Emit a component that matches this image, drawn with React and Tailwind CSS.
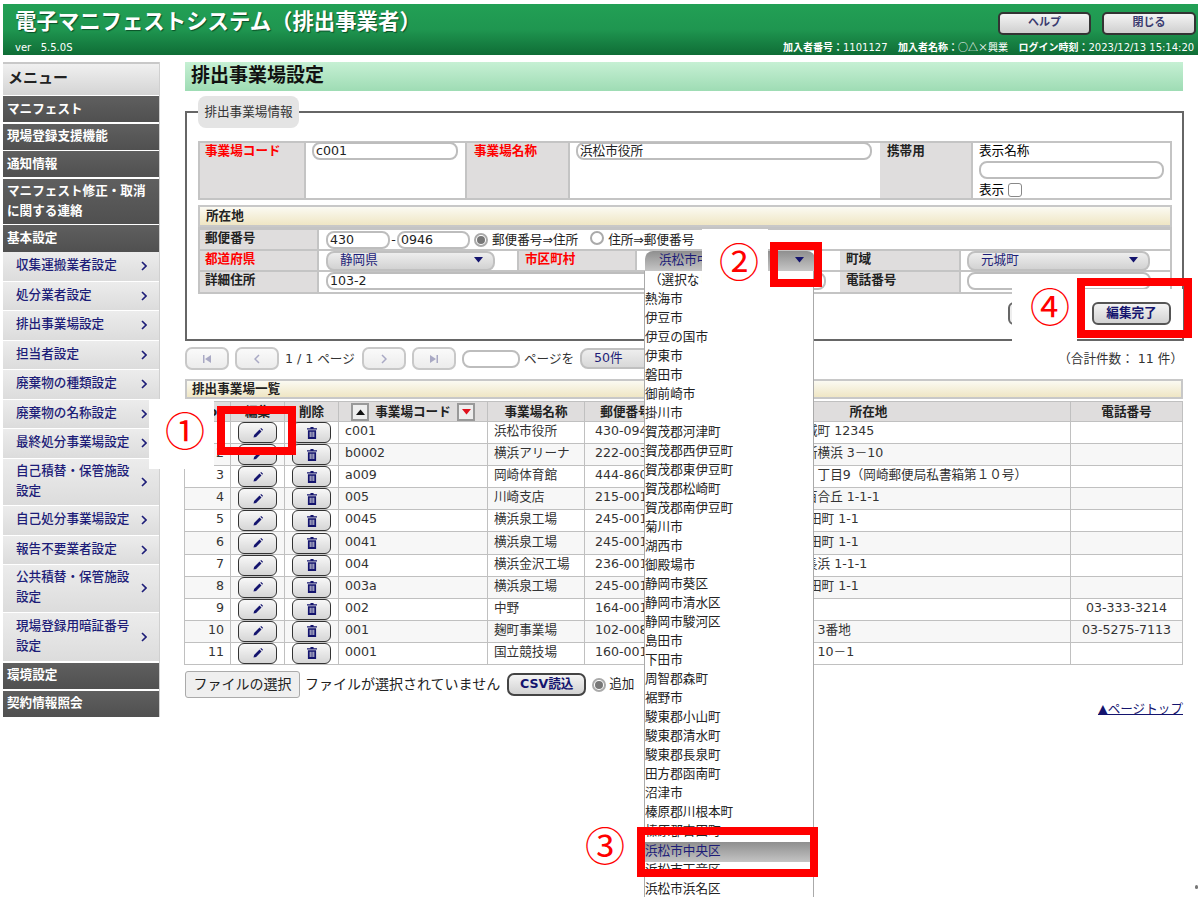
import React from "react";

const FONT = "[font-family:'DejaVu_Sans','Noto_Sans_CJK_JP',sans-serif]";
const CJK = "[font-family:'Noto_Sans_CJK_JP',sans-serif]";

const Dark = ({ h, children }) => (
  <div className={`bg-gradient-to-b from-[#5f5f5f] to-[#505050] text-white font-bold pl-[4px] pb-[1px] flex items-center leading-[20px] text-[12.6px] ${h}`}>
    <div>{children}</div>
  </div>
);

const Sub = ({ h, children }) => (
  <div className={`bg-gradient-to-b from-[#ececec] to-[#dcdcdc] text-[#1d1d78] font-medium pl-[13px] pr-[12px] flex items-center justify-between leading-[20px] text-[12.6px] ${h}`}>
    <div className="w-[114px] pb-[2px]">{children}</div>
    <svg width="6" height="10" viewBox="0 0 6 10" className="shrink-0"><path d="M1 1l4 4-4 4" fill="none" stroke="#1d1d78" strokeWidth="1.6" /></svg>
  </div>
);

const Label = ({ red, w, pl = "pl-[7px]", children }) => (
  <div className={`bg-[#dfdddd] font-bold border-r-2 border-[#c4c4c4] shrink-0 leading-[16px] ${pl} ${w} ${red ? "text-[#ff0000]" : "text-[#222]"}`}>{children}</div>
);

const Field = ({ w, value }) => (
  <div className={`h-[18px] border-2 border-[#bdbdbd] rounded-[8px] bg-white px-[2px] leading-[14px] text-[#222] overflow-hidden whitespace-nowrap ${w}`}>{value}</div>
);

const Arrow = ({ color = "#14146e" }) => (
  <svg width="9" height="6" viewBox="0 0 9 6" className="shrink-0"><path d="M0 0h9L4.500 5.500z" fill={color} /></svg>
);

const SelectBox = ({ w, value }) => (
  <div className={`h-[20px] border-2 border-[#c0c0c0] rounded-[8px] bg-gradient-to-b from-[#eeeeee] to-[#d2d2d2] flex items-center justify-between pl-[12px] pr-[10px] pb-[2px] text-[#1d1d78] ${w}`}>
    <span>{value}</span>
    <Arrow />
  </div>
);

const Radio = ({ on }) => (
  <span className="inline-flex w-[14px] h-[14px] rounded-full border-2 border-[#aaa] bg-white items-center justify-center shrink-0">
    {on && <span className="w-[8px] h-[8px] rounded-full bg-[#777]" />}
  </span>
);

const PagerBtn = ({ w = "w-[44px]", children }) => (
  <div className={`h-[23px] ${w} border-2 border-[#c8c8c8] rounded-[7px] bg-gradient-to-b from-[#fafafa] to-[#ececec] flex items-center justify-center shrink-0`}>{children}</div>
);

const Pencil = () => (
  <svg width="12" height="12" viewBox="0 0 12 12"><path d="M1.500 10.500l.6-2.600 5.400-5.400 2 2-5.400 5.400zM8.300 1.700l.9-.7 1.800 1.800-.7.900z" fill="#14146e" /></svg>
);

const Trash = () => (
  <svg width="10" height="12" viewBox="0 0 11 13"><path d="M3.800 0h3.400v1.200H11v1.400H0V1.200h3.800zM1 3.400h9V13H1zM3 5v6h1V5zm2 0v6h1V5zm2 0v6h1V5z" fill="#14146e" fillRule="evenodd" /></svg>
);

const RowBtn = ({ children }) => (
  <div className="mx-auto -my-[1px] w-[39px] h-[21px] border-[1.5px] border-[#333] rounded-[6px] bg-gradient-to-b from-[#f8f8f8] to-[#d6d6d6] flex items-center justify-center">{children}</div>
);

const rows = [
  ["c001", "浜松市役所", "430-0946", "静岡県浜松市中央区元城町 12345", ""],
  ["b0002", "横浜アリーナ", "222-0033", "神奈川県横浜市港北区新横浜 3－10", ""],
  ["a009", "岡崎体育館", "444-8601", "愛知県岡崎市戸崎町字　丁目9（岡崎郵便局私書箱第１０号）", ""],
  ["005", "川崎支店", "215-0011", "神奈川県川崎市麻生区百合丘 1-1-1", ""],
  ["0045", "横浜泉工場", "245-0016", "神奈川県横浜市 泉区中田町 1-1", ""],
  ["0041", "横浜泉工場", "245-0016", "神奈川県横浜市 泉区中田町 1-1", ""],
  ["004", "横浜金沢工場", "236-0011", "神奈川県横浜市金沢区長浜 1-1-1", ""],
  ["003a", "横浜泉工場", "245-0016", "神奈川県横浜市 泉区中田町 1-1", ""],
  ["002", "中野", "164-0011", "東京都中野区中央", "03-333-3214"],
  ["001", "麹町事業場", "102-0083", "東京都千代田区麹町　　3番地", "03-5275-7113"],
  ["0001", "国立競技場", "160-0013", "東京都新宿区霞ヶ丘町　10－1", ""],
];

const cities = [
  "（選択なし）", "熱海市", "伊豆市", "伊豆の国市", "伊東市", "磐田市", "御前崎市", "掛川市", "賀茂郡河津町", "賀茂郡西伊豆町", "賀茂郡東伊豆町", "賀茂郡松崎町", "賀茂郡南伊豆町", "菊川市", "湖西市", "御殿場市", "静岡市葵区", "静岡市清水区", "静岡市駿河区", "島田市", "下田市", "周智郡森町", "裾野市", "駿東郡小山町", "駿東郡清水町", "駿東郡長泉町", "田方郡函南町", "沼津市", "榛原郡川根本町", "榛原郡吉田町", "浜松市中央区", "浜松市天竜区", "浜松市浜名区",
];

const th = "bg-[#dfdddd] border-[1.5px] border-[#c0c0c0] font-bold text-[#222] p-0 text-center leading-[18px]";
const td = "border-[1.5px] border-[#c0c0c0] p-0 text-[#333] font-normal leading-[18px]";

export default function App() {
  return (
    <div className={`relative w-[1198px] h-[899px] overflow-hidden bg-white pl-[3px] pt-[4px] text-[12.6px] ${FONT}`}>
      {/* header */}
      <header className="h-[51px] bg-gradient-to-b from-[#22a055] via-[#1f9650] to-[#0f6d36] flex justify-between text-white">
        <div className="pl-[12px] flex flex-col">
          <div className="text-[21.4px] font-bold leading-[24px] mt-[6px] [text-shadow:1px_1px_1px_#0b4f27] whitespace-nowrap">電子マニフェストシステム（排出事業者）</div>
          <div className="text-[10px] leading-[12px] mt-[8px] whitespace-nowrap">ver&nbsp;&nbsp; 5.5.0S</div>
        </div>
        <div className="flex flex-col items-end">
          <div className="flex gap-[11px] mt-[8px] mr-[2px]">
            <div className="w-[93px] h-[23px] border-2 border-[#333] rounded-[5px] bg-gradient-to-b from-[#f4f4f4] to-[#cfcfcf] text-[#3a3a6e] text-[11px] font-bold flex items-center justify-center pb-[1px]">ヘルプ</div>
            <div className="w-[94px] h-[23px] border-2 border-[#333] rounded-[5px] bg-gradient-to-b from-[#f4f4f4] to-[#cfcfcf] text-[#3a3a6e] text-[11px] font-bold flex items-center justify-center pb-[1px]">閉じる</div>
          </div>
          <div className="text-[10px] leading-[12px] mt-[6px] font-bold whitespace-nowrap w-[415px] overflow-hidden">
            加入者番号：<span className="font-normal">1101127</span>&nbsp;&nbsp; 加入者名称：<span className={`font-normal ${CJK}`}>○△×興業</span>&nbsp;&nbsp; ログイン時刻：<span className="font-normal">2023/12/13 15:14:20</span>
          </div>
        </div>
      </header>

      <div className="flex mt-[7px]">
        {/* sidebar */}
        <aside className="w-[157px] shrink-0 self-start border-r-[1.5px] border-[#d0d0d0] flex flex-col">
          <div className="h-[33px] bg-gradient-to-b from-[#f0f0f0] to-[#d4d4d4] border-t-2 border-[#c8c8c8] text-[#222] text-[15px] font-bold pl-[5px] pb-[3px] flex items-center mb-[1px]">メニュー</div>
          <div className="flex flex-col gap-[1.500px]">
            <Dark h="h-[26px]">マニフェスト</Dark>
            <Dark h="h-[26px]">現場登録支援機能</Dark>
            <Dark h="h-[26px]">通知情報</Dark>
            <Dark h="h-[45px]">マニフェスト修正・取消<br />に関する連絡</Dark>
            <Dark h="h-[27px]">基本設定</Dark>
          </div>
          <div className="flex flex-col gap-[1px]">
            <Sub h="h-[28.500px]">収集運搬業者設定</Sub>
            <Sub h="h-[28.500px]">処分業者設定</Sub>
            <Sub h="h-[28.500px]">排出事業場設定</Sub>
            <Sub h="h-[28.500px]">担当者設定</Sub>
            <Sub h="h-[28.500px]">廃棄物の種類設定</Sub>
            <Sub h="h-[28.500px]">廃棄物の名称設定</Sub>
            <Sub h="h-[28.500px]">最終処分事業場設定</Sub>
            <Sub h="h-[46.500px]">自己積替・保管施設設定</Sub>
            <Sub h="h-[28.500px]">自己処分事業場設定</Sub>
            <Sub h="h-[28.500px]">報告不要業者設定</Sub>
            <Sub h="h-[46.500px]">公共積替・保管施設設定</Sub>
            <Sub h="h-[48px]">現場登録用暗証番号設定</Sub>
          </div>
          <div className="flex flex-col gap-[2px] mt-[2px]">
            <Dark h="h-[26px]">環境設定</Dark>
            <Dark h="h-[26px]">契約情報照会</Dark>
          </div>
        </aside>

        {/* main */}
        <main className="w-[998px] ml-[25px] shrink-0">
          <div className="h-[29px] bg-gradient-to-b from-[#c6f0d4] to-[#9edcb4] text-[#111] text-[19px] font-bold pl-[6px] pb-[3px] flex items-center">排出事業場設定</div>

          <section className="relative mt-[20px] h-[230px] border-2 border-[#666] px-[11px] pt-[28px] w-[999px]">
            <div className="absolute left-[11px] top-[-17px] w-[101px] h-[32px] bg-[#e4e4e4] rounded-[8px] text-[#333] flex items-center justify-center">排出事業場情報</div>

            <div className="flex h-[59px] w-[974px] border-2 border-[#c4c4c4]">
              <Label red w="w-[106px]" pl="pl-[5px]">事業場コード</Label>
              <div className="w-[161px] pl-[6px] border-r-2 border-[#c4c4c4]"><div className="-mt-[1px]"><Field w="w-[146px]" value="c001" /></div></div>
              <Label red w="w-[103px]">事業場名称</Label>
              <div className="w-[310px] pl-[6px]"><div className="-mt-[1px]"><Field w="w-[296px]" value="浜松市役所" /></div></div>
              <Label w="w-[93px]">携帯用</Label>
              <div className="flex-1 pl-[6px]">
                <div className="h-[18px] leading-[15px]">表示名称</div>
                <Field w="w-[185px]" value="" />
                <div className="flex items-center gap-[4px] mt-[3px] leading-[16px]">表示 <span className="w-[14px] h-[14px] border-[1.5px] border-[#888] rounded-[3px] bg-white" /></div>
              </div>
            </div>

            <div className="mt-[5px] w-[974px] h-[22px] border-2 border-[#c8c8c8] bg-gradient-to-b from-[#fbfaf2] to-[#efe6c4] font-bold text-[#222] pl-[6px] leading-[18px]">所在地</div>

            <div className="w-[974px] border-2 border-t-[3px] border-[#c4c4c4] leading-[16px]">
              <div className="flex h-[21px] border-b-2 border-[#c4c4c4]">
                <Label w="w-[119px]" pl="pl-[5px]">郵便番号</Label>
                <div className="flex items-center pl-[7px] text-[#222] whitespace-nowrap">
                  <Field w="w-[64px]" value="430" />
                  <span className="w-[7px] text-center">-</span>
                  <Field w="w-[73px]" value="0946" />
                  <span className="ml-[4px]"><Radio on /></span>
                  <span className="ml-[4px]">郵便番号⇒住所</span>
                  <span className="ml-[12px]"><Radio /></span>
                  <span className="ml-[4px]">住所⇒郵便番号</span>
                </div>
              </div>
              <div className="flex h-[21px] border-b-2 border-[#c4c4c4]">
                <Label red w="w-[119px]" pl="pl-[5px]">都道府県</Label>
                <div className="w-[200px] pl-[7px] border-r-2 border-[#c4c4c4]"><SelectBox w="w-[169px]" value="静岡県" /></div>
                <Label red w="w-[118px]" pl="pl-[6px]">市区町村</Label>
                <div className="w-[203px] pl-[8px]">
                  <div className="w-[170px] h-[20px] rounded-t-[8px] bg-gradient-to-b from-[#8f8f8f] to-[#c6c6c6] flex items-center justify-between pl-[14px] pr-[11px] pb-[2px] text-[#1d1d78]">
                    <span>浜松市中央区</span>
                    <Arrow />
                  </div>
                </div>
                <Label w="w-[121px]" pl="pl-[6px]">町域</Label>
                <div className="flex-1 pl-[6px]"><SelectBox w="w-[183px]" value="元城町" /></div>
              </div>
              <div className="flex h-[20px]">
                <Label w="w-[119px]" pl="pl-[5px]">詳細住所</Label>
                <div className="w-[521px] pl-[7px]"><Field w="w-[500px]" value="103-2" /></div>
                <Label w="w-[121px]" pl="pl-[6px]">電話番号</Label>
                <div className="flex-1 pl-[6px]"><Field w="w-[184px]" value="" /></div>
              </div>
            </div>

            <div className="flex justify-end mt-[8px] w-[973px] gap-[8px]">
              <div className="w-[76px] h-[23px] border-2 border-[#666] rounded-[6px] bg-[#eee]" />
              <div className="relative z-30 w-[79px] h-[23px] border-2 border-[#555] rounded-[6px] bg-gradient-to-b from-[#f4f4f4] to-[#d2d2d2] text-[#14146e] font-bold flex items-center justify-center pb-[1px]">編集完了</div>
            </div>
          </section>

          {/* pager */}
          <div className="flex items-center mt-[6px] w-[998px] h-[23px] text-[#333] leading-[16px]">
            <PagerBtn><svg width="10" height="8" viewBox="0 0 10 8"><path d="M1 0h1.500v8H1zM9 0v8L3 4z" fill="#a9a9c4" /></svg></PagerBtn>
            <span className="ml-[6px]"><PagerBtn><svg width="6" height="10" viewBox="0 0 6 10"><path d="M5 1L1 5l4 4" fill="none" stroke="#a9a9c4" strokeWidth="1.500" /></svg></PagerBtn></span>
            <span className="ml-[6px] w-[77px] whitespace-nowrap">1 / 1 ページ</span>
            <PagerBtn><svg width="6" height="10" viewBox="0 0 6 10"><path d="M1 1l4 4-4 4" fill="none" stroke="#a9a9c4" strokeWidth="1.500" /></svg></PagerBtn>
            <span className="ml-[6px]"><PagerBtn><svg width="10" height="8" viewBox="0 0 10 8"><path d="M9 0H7.500v8H9zM1 0v8l6-4z" fill="#a9a9c4" /></svg></PagerBtn></span>
            <div className="ml-[6px] w-[58px] h-[18px] border-2 border-[#bdbdbd] rounded-[8px]" />
            <span className="ml-[4px] w-[56px] whitespace-nowrap">ページを</span>
            <div className="w-[100px] h-[21px] border-2 border-[#c0c0c0] rounded-[8px] bg-gradient-to-b from-[#eeeeee] to-[#d8d8d8] pl-[12px] text-[#1d1d78] leading-[15px]">50件</div>
            <span className="ml-auto">（合計件数： 11 件）</span>
          </div>

          {/* list */}
          <div className="mt-[9px] w-[998px] h-[20px] border-2 border-[#c8c8c8] bg-gradient-to-b from-[#fbfaf2] to-[#efe6c4] font-bold text-[#222] pl-[5px] leading-[16px]">排出事業場一覧</div>
          <table className="mt-[2px] -ml-[1px] w-[998px] table-fixed border-collapse">
            <colgroup>
              <col className="w-[46px]" />
              <col className="w-[54px]" />
              <col className="w-[54px]" />
              <col className="w-[149px]" />
              <col className="w-[97px]" />
              <col className="w-[82px]" />
              <col className="w-[404px]" />
              <col className="w-[112px]" />
            </colgroup>
            <thead>
              <tr className="h-[20px]">
                <th className={th}>No</th>
                <th className={th}>編集</th>
                <th className={th}>削除</th>
                <th className={th}>
                  <div className="flex items-center justify-between px-[12px] h-[18px]">
                    <span className="w-[18px] h-[18px] border-2 border-[#999] bg-[#eee] flex items-center justify-center"><svg width="9" height="6" viewBox="0 0 9 6"><path d="M0 6h9L4.500 .5z" fill="#111" /></svg></span>
                    <span>事業場コード</span>
                    <span className="w-[18px] h-[18px] border-2 border-[#999] bg-[#eee] flex items-center justify-center"><Arrow color="#e0101c" /></span>
                  </div>
                </th>
                <th className={th}>事業場名称</th>
                <th className={th}>郵便番号</th>
                <th className={th}>所在地</th>
                <th className={th}>電話番号</th>
              </tr>
            </thead>
            <tbody>
              {rows.map((r, i) => (
                <tr key={r[0]} className={`h-[22.100px] ${i % 2 ? "bg-[#f7f7f7]" : "bg-white"}`}>
                  <td className={`${td} text-right pr-[6px] pb-[3px]`}>{i + 1}</td>
                  <td className={td}><RowBtn><Pencil /></RowBtn></td>
                  <td className={td}><RowBtn><Trash /></RowBtn></td>
                  <td className={`${td} pl-[6px] pb-[3px]`}>{r[0]}</td>
                  <td className={`${td} pl-[6px] pb-[3px] whitespace-nowrap`}>{r[1]}</td>
                  <td className={`${td} pl-[10px] pb-[3px] whitespace-nowrap`}>{r[2]}</td>
                  <td className={`${td} pl-[12px] pb-[3px] whitespace-nowrap`}>{r[3]}</td>
                  <td className={`${td} text-center pb-[3px]`}>{r[4]}</td>
                </tr>
              ))}
            </tbody>
          </table>

          {/* footer */}
          <div className="flex items-center mt-[6px] h-[27px] text-[14px] text-[#222] whitespace-nowrap">
            <div className="w-[115px] h-[27px] border-[1.5px] border-[#aaa] rounded-[3px] bg-[#efefef] flex items-center justify-center pb-[1px]">ファイルの選択</div>
            <span className="ml-[5px] pb-[1px]">ファイルが選択されていません</span>
            <div className="ml-[7px] w-[79px] h-[23px] border-2 border-[#444] rounded-[7px] bg-gradient-to-b from-[#f4f4f4] to-[#d2d2d2] text-[#14146e] text-[12.6px] font-bold flex items-center justify-center pb-[1px]">CSV読込</div>
            <span className="ml-[6px]"><Radio on /></span>
            <span className="ml-[3px] text-[12.6px] pb-[1px]">追加</span>
          </div>
          <div className="mt-[2px] text-right">
            <span className="text-[#14146e] underline">▲ページトップ</span>
          </div>
        </main>
      </div>

      {/* annotation: dropdown list */}
      <div className="absolute left-[644px] top-[271px] w-[170px] h-[626px] bg-white border-x-[1.5px] border-[#aaa] z-10 overflow-hidden text-[#222] pt-[1px]">
        {cities.map((c, i) => (
          <div key={c} className={`whitespace-nowrap ${i === 0 ? "pl-[4px]" : ""} ${c === "浜松市中央区" ? "bg-gradient-to-b from-[#8f8f8f] to-[#c4c4c4] text-[#1d1d78] h-[20px] leading-[18px]" : "h-[19px] leading-[16px]"}`}>{c}</div>
        ))}
      </div>

      {/* annotation: white patches */}
      <div className="absolute left-[149px] top-[399px] w-[65px] h-[70px] bg-white z-20" />
      <div className="absolute left-[702px] top-[229px] w-[66px] h-[62px] bg-white z-20" />
      <div className="absolute left-[1012px] top-[278px] w-[65px] h-[63px] bg-white z-20" />
      <div className="absolute left-[1085px] top-[289px] w-[98px] h-[41px] bg-white z-20" />

      {/* annotation: red frames */}
      <div className="absolute left-[217px] top-[406px] w-[79px] h-[49px] border-[8px] border-[#ff0000] z-30" />
      <div className="absolute left-[770px] top-[242px] w-[52px] h-[45px] border-[8px] border-[#ff0000] z-30" />
      <div className="absolute left-[637px] top-[827px] w-[181px] h-[50px] border-[8px] border-[#ff0000] z-30" />
      <div className="absolute left-[1077px] top-[278px] w-[115px] h-[60px] border-[8px] border-[#ff0000] z-30" />

      {/* annotation: numbers */}
      <span className={`absolute left-[165px] top-[405px] text-[40px] leading-[48px] text-[#ff0000] z-30 ${CJK}`}>①</span>
      <span className={`absolute left-[719px] top-[236px] text-[40px] leading-[48px] text-[#ff0000] z-30 ${CJK}`}>②</span>
      <span className={`absolute left-[585px] top-[820px] text-[40px] leading-[48px] text-[#ff0000] z-30 ${CJK}`}>③</span>
      <span className={`absolute left-[1030px] top-[281px] text-[40px] leading-[48px] text-[#ff0000] z-30 ${CJK}`}>④</span>

      <span className="absolute left-[1195px] top-[885px] w-[3px] h-[4px] rounded-full bg-[#777]" />
    </div>
  );
}
